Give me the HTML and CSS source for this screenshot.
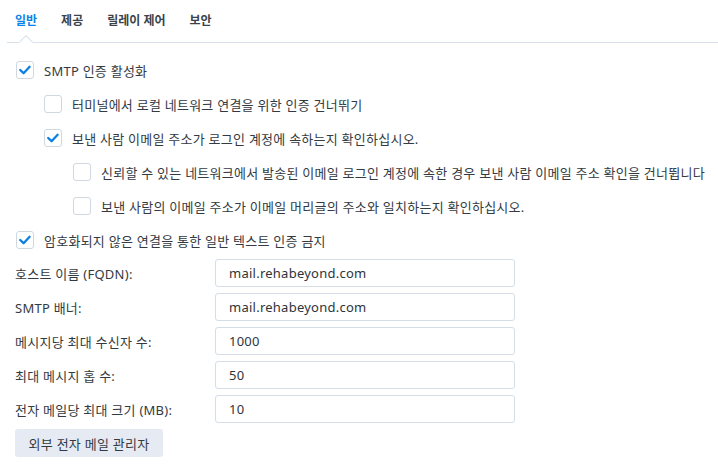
FILE: index.html
```html
<!DOCTYPE html>
<html lang="ko">
<head>
<meta charset="utf-8">
<link rel="stylesheet" href="styles.css">
</head>
<body>
<div class="tabs">
  <div class="tab active">일반</div>
  <div class="tab">제공</div>
  <div class="tab">릴레이 제어</div>
  <div class="tab">보안</div>
</div>
<div class="content">
  <div class="check-row">
    <span class="box checked"><svg viewBox="0 0 18 18"><path d="M3.6 9 L7.4 12.6 L14.2 5.4" /></svg></span>
    <span>SMTP 인증 활성화</span>
  </div>
  <div class="check-row indent1">
    <span class="box"></span>
    <span>터미널에서 로컬 네트워크 연결을 위한 인증 건너뛰기</span>
  </div>
  <div class="check-row indent1">
    <span class="box checked"><svg viewBox="0 0 18 18"><path d="M3.6 9 L7.4 12.6 L14.2 5.4" /></svg></span>
    <span>보낸 사람 이메일 주소가 로그인 계정에 속하는지 확인하십시오.</span>
  </div>
  <div class="check-row indent2">
    <span class="box"></span>
    <span>신뢰할 수 있는 네트워크에서 발송된 이메일 로그인 계정에 속한 경우 보낸 사람 이메일 주소 확인을 건너뜁니다</span>
  </div>
  <div class="check-row indent2">
    <span class="box"></span>
    <span>보낸 사람의 이메일 주소가 이메일 머리글의 주소와 일치하는지 확인하십시오.</span>
  </div>
  <div class="check-row">
    <span class="box checked"><svg viewBox="0 0 18 18"><path d="M3.6 9 L7.4 12.6 L14.2 5.4" /></svg></span>
    <span>암호화되지 않은 연결을 통한 일반 텍스트 인증 금지</span>
  </div>

  <div class="form">
    <div class="form-row"><label>호스트 이름 (FQDN):</label><div class="input">mail.rehabeyond.com</div></div>
    <div class="form-row"><label>SMTP 배너:</label><div class="input">mail.rehabeyond.com</div></div>
    <div class="form-row"><label>메시지당 최대 수신자 수:</label><div class="input">1000</div></div>
    <div class="form-row"><label>최대 메시지 홉 수:</label><div class="input">50</div></div>
    <div class="form-row"><label>전자 메일당 최대 크기 (MB):</label><div class="input">10</div></div>
  </div>
  <button class="btn">외부 전자 메일 관리자</button>
</div>
</body>
</html>
```
FILE: styles.css
```css
* { box-sizing: border-box; }
body {
  margin: 0;
  background: #fff;
  font-family: "Noto Sans", "Noto Sans CJK KR", sans-serif;
  font-size: 13px;
  letter-spacing: 0.25px;
  color: #333a42;
}
.tabs {
  display: flex;
  align-items: center;
  gap: 24px;
  height: 43px;
  margin-left: 7px;
  padding-left: 8px;
  padding-bottom: 1px;
  border-bottom: 1px solid #d9e2eb;
}
.tab {
  position: relative;
  font-weight: bold;
  font-size: 12px;
  letter-spacing: 0;
  color: #3a424b;
  height: 42px;
  line-height: 42px;
}
.tab.active { color: #0a84e6; }
.tab.active::after {
  content: "";
  position: absolute;
  left: 50%;
  bottom: -5px;
  width: 9px;
  height: 9px;
  margin-left: -5px;
  background: #fff;
  border-left: 1px solid #d9e2eb;
  border-top: 1px solid #d9e2eb;
  transform: rotate(45deg);
}
.content {
  padding: 10px 0 0 16px;
}
.check-row {
  display: flex;
  align-items: center;
  height: 34px;
  gap: 10px;
  white-space: nowrap;
}
.indent1 { padding-left: 28px; }
.indent2 { padding-left: 57px; }
.box {
  width: 18px;
  height: 18px;
  border: 1px solid #cfd8e1;
  border-radius: 3px;
  background: #fff;
  flex: none;
  display: flex;
}
.box svg { width: 16px; height: 16px; }
.box path {
  fill: none;
  stroke: #0a7fe4;
  stroke-width: 2.6;
  stroke-linecap: round;
  stroke-linejoin: round;
}
.form {
  margin-top: 2px;
  display: flex;
  flex-direction: column;
  gap: 6px;
  margin-left: -1px;
}
.form-row {
  display: flex;
  align-items: center;
  height: 28px;
}
.form-row label {
  width: 200px;
  flex: none;
}
.input {
  width: 300px;
  height: 28px;
  border: 1px solid #d5dee7;
  border-radius: 3px;
  padding: 0 13px;
  line-height: 26px;
  color: #2d343b;
}
.btn {
  margin-top: 6px;
  margin-left: -1px;
  height: 28px;
  width: 148px;
  border: none;
  border-radius: 3px;
  background: #e6ebf3;
  font-family: inherit;
  font-size: 13px;
  letter-spacing: 0.25px;
  color: #333a42;
  padding: 0;
}
```
